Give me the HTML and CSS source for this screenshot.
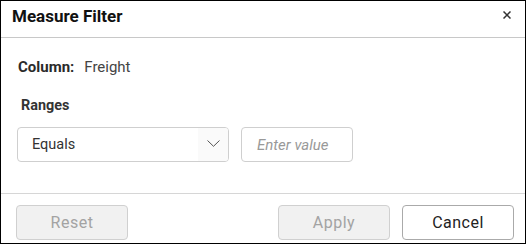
FILE: index.html
```html
<!DOCTYPE html>
<html>
<head>
<meta charset="utf-8">
<link rel="stylesheet" href="styles.css">
</head>
<body>
<div class="dialog">
  <div class="header">
    <div class="title">Measure Filter</div>
    <svg class="close" width="8" height="8" viewBox="0 0 8 8"><path d="M0.5 0.5 L7.5 7.5 M7.5 0.5 L0.5 7.5" stroke="#333" stroke-width="1.5" fill="none"/></svg>
  </div>
  <div class="content">
    <div class="column-row">
      <span class="label">Column:</span>
      <span class="value">Freight</span>
    </div>
    <div class="ranges">Ranges</div>
    <div class="controls">
      <div class="select">
        <span class="select-text">Equals</span>
        <span class="select-arrow">
          <svg width="13" height="7" viewBox="0 0 13 7"><path d="M0.5 0.5 L6.5 6.3 L12.5 0.5" stroke="#555" stroke-width="1" fill="none"/></svg>
        </span>
      </div>
      <div class="input"><span class="placeholder">Enter value</span></div>
    </div>
  </div>
  <div class="footer">
    <button class="btn disabled">Reset</button>
    <div class="spacer"></div>
    <button class="btn disabled">Apply</button>
    <button class="btn cancel">Cancel</button>
  </div>
</div>
</body>
</html>
```

FILE: styles.css
```css
html, body {
  margin: 0;
  padding: 0;
  background: #fff;
}
.dialog {
  width: 526px;
  height: 244px;
  box-sizing: border-box;
  border: 1px solid #000;
  display: flex;
  flex-direction: column;
  font-family: Roboto, "Liberation Sans", sans-serif;
  background: #fff;
}
.header {
  height: 37px;
  box-sizing: border-box;
  border-bottom: 1px solid #c8c8c8;
  display: flex;
  justify-content: space-between;
  align-items: flex-start;
  padding: 5px 14px 0 11px;
}
.title {
  font-size: 17px;
  font-weight: 700;
  line-height: 20px;
  color: #111;
}
.close {
  margin-top: 5px;
}
.content {
  flex: 1;
  padding: 19px 0 0 16px;
}
.column-row {
  display: flex;
  gap: 10px;
  font-size: 15px;
  line-height: 20px;
  padding-left: 1px;
}
.label {
  font-weight: 700;
  color: #2a2a2a;
}
.value {
  color: #444;
}
.ranges {
  margin-top: 19px;
  padding-left: 4px;
  font-size: 14.4px;
  font-weight: 700;
  line-height: 20px;
  color: #333;
}
.controls {
  margin-top: 11px;
  display: flex;
  gap: 12px;
}
.select {
  width: 212px;
  height: 35px;
  box-sizing: border-box;
  border: 1px solid #cfcfcf;
  border-radius: 4px;
  display: flex;
  align-items: center;
  overflow: hidden;
}
.select-text {
  flex: 1;
  padding-left: 14px;
  font-size: 14.5px;
  color: #333;
}
.select-arrow {
  width: 30px;
  height: 100%;
  background: #fafafa;
  display: flex;
  align-items: center;
  justify-content: center;
}
.select-arrow svg {
  margin-top: -3px;
}
.input {
  width: 112px;
  height: 35px;
  box-sizing: border-box;
  border: 1px solid #cfcfcf;
  border-radius: 4px;
  display: flex;
  align-items: center;
  padding-left: 15px;
}
.placeholder {
  font-size: 15px;
  font-style: italic;
  color: #999;
}
.footer {
  border-top: 1px solid #d6d6d6;
  padding: 11px 11px 0 15px;
  height: 50px;
  box-sizing: border-box;
  display: flex;
  gap: 12px;
}
.spacer {
  flex: 1;
}
.btn {
  width: 112px;
  height: 35px;
  box-sizing: border-box;
  border-radius: 4px;
  font-family: Roboto, "Liberation Sans", sans-serif;
  font-size: 16px;
  letter-spacing: 0.5px;
  padding: 0;
}
.btn.disabled {
  background: #f1f1f1;
  border: 1px solid #d0d0d0;
  color: #a3a3a3;
}
.btn.cancel {
  background: #fff;
  border: 1px solid #aaa;
  color: #222;
}
```
